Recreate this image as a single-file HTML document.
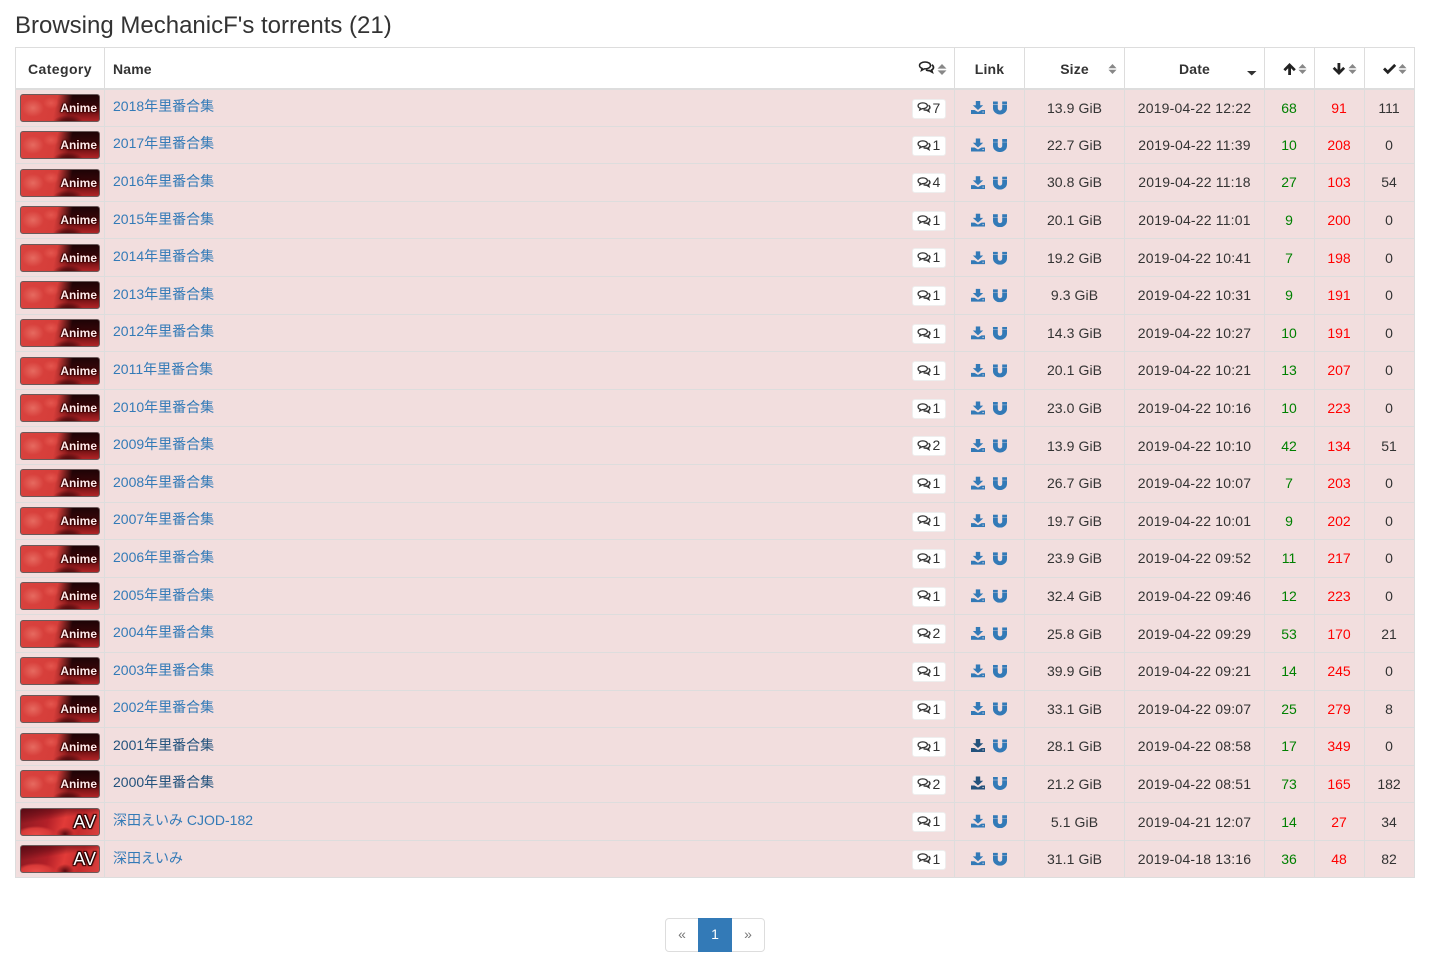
<!DOCTYPE html>
<html lang="en"><head><meta charset="utf-8"><title>Browsing MechanicF's torrents</title>
<style>
html,body{margin:0;padding:0;background:#fff}
body{width:1429px;height:970px;position:relative;overflow:hidden;font:14px/20px "Liberation Sans","Noto Sans CJK SC",sans-serif;color:#333}
h3{position:absolute;left:15px;top:13px;margin:0;font-size:24px;line-height:26px;font-weight:500}
table{position:absolute;left:15px;top:47px;width:1399px;border-collapse:collapse;table-layout:fixed}
th,td{border:1px solid #ddd;padding:0;text-align:center;position:relative;box-sizing:border-box}
th{height:41px;padding-top:2px;border-bottom:2px solid #ddd;font-weight:700;color:#333;letter-spacing:.15px}
th.n,td.n{text-align:left;padding-left:8px}
tr.r{height:37.6px}
td{background:#f2dede;vertical-align:middle}
td.n{padding-bottom:3px}
td.d{letter-spacing:.18px}
td.z{letter-spacing:.08px}
td.e{padding-right:1px}
a{color:#337ab7;text-decoration:none}
a.v{color:#23527c}
td.s{color:green;padding-right:1px}td.l{color:red;padding-right:1px}
.b{position:absolute;left:4px;top:4.5px;width:80px;height:28px;box-sizing:border-box;border:1px solid #6a5a5a;border-radius:3px;overflow:hidden;background:radial-gradient(ellipse 15px 7px at 47px 27px,#4a0a0c 0,rgba(74,10,12,.7) 50%,transparent 100%),radial-gradient(ellipse 11px 9px at 12px 13px,#e66a60 0,transparent 100%),radial-gradient(ellipse 8px 6px at 30px 8px,#e4564e 0,transparent 100%),linear-gradient(103deg,#d9423e 0,#d63e3a 44%,rgba(205,55,50,0) 62%),linear-gradient(180deg,#1e0306 0,#350608 40%,#7e1517 72%,#b02426 100%)}
.b i{position:absolute;right:2px;top:6px;font:700 12px/14px "Liberation Sans",sans-serif;color:#ffe9e9;text-shadow:0 0 2px #300,0 0 1px #300,1px 0 1px #300,-1px 0 1px #300}
.a{background:radial-gradient(ellipse 20px 8px at 15px 25px,#e94a46 0,#d83a38 70%,transparent 100%),linear-gradient(172deg,rgba(70,6,16,.75) 0,rgba(90,10,20,.5) 22%,transparent 40%),radial-gradient(ellipse 9px 7px at 44px 25px,#5a0a10 0,transparent 100%),linear-gradient(105deg,#8c1a22 0,#b32028 35%,#e23b38 55%,#c62b2c 75%,#d9403e 100%)}
.a i{top:3px;right:3px;font:400 18px/20px "Liberation Sans",sans-serif;color:#fff;text-shadow:0 0 2px #200,1px 1px 1px #200,-1px -1px 1px #200,1px -1px 1px #200,-1px 1px 1px #200}
.c{position:absolute;left:807px;top:9px;width:34px;height:20px;box-sizing:border-box;background:#fff;border:1px solid #eee;border-radius:3px;font-size:14px;line-height:16px;text-align:left;padding-left:19.500px;color:#333}
svg{position:absolute;overflow:visible}
.p{position:absolute;left:665px;top:918px;width:100px;height:34px;box-sizing:border-box;border:1px solid #ddd;border-radius:4px;font-size:14px;line-height:32px;text-align:center;color:#777}
.p span{position:absolute;top:-1px;height:34px}
.p .on{left:32px;width:34px;background:#337ab7;color:#fff}
</style></head>
<body>
<svg width="0" height="0" style="position:absolute"><defs>
<symbol id="cm" viewBox="0 0 16 13"><g fill="none" stroke="currentColor" stroke-width="1.5"><path d="M6.5 1C3.4 1 1 2.500 1 4.400c0 1.400 1 2.400 2.600 3L3 9.400l2.700-1.500h1c3 0 5.300-1.500 5.300-3.500S9.600 1 6.500 1z"/><path d="M13.300 3.800c1 .6 1.700 1.500 1.700 2.600 0 1.100-.7 2-1.900 2.600l.7 2.200-2.800-1.600c-1.300.1-2.500-.1-3.500-.6" stroke-width="1.700"/></g></symbol>
<symbol id="dl" viewBox="0 0 14 13"><path fill="currentColor" d="M4.800 0h4.400v4.200h3L7 9 1.800 4.200h3zM0 9h3.500L7 11l3.500-2H14v4H0zM11.500 10.500v1h1.200v-1z"/></symbol>
<symbol id="mg" viewBox="0 0 14 13"><path fill="currentColor" d="M0 0h4.800v2.800H0zM9.200 0H14v2.800H9.200zM0 3.200h4.800v3.600a2.200 2.200 0 0 0 4.400 0V3.200H14v3.600a7 6.200 0 0 1-14 0z"/></symbol>
<symbol id="so" viewBox="0 0 10 11"><path fill="#888" d="M5 0l4.500 4.600H.5zM.5 6.400h9L5 11z"/></symbol>
</defs></svg>
<h3>Browsing MechanicF's torrents (21)</h3>
<table>
<colgroup><col style="width:89px"><col style="width:850px"><col style="width:70px"><col style="width:100px"><col style="width:140px"><col style="width:50px"><col style="width:50px"><col style="width:50px"></colgroup>
<thead><tr><th style="letter-spacing:.4px">Category</th><th class="n">Name</th><th>Link</th><th>Size</th><th>Date</th><th></th><th></th><th></th></tr></thead>
<tbody>
<tr class="r"><td><span class="b"><i>Anime</i></span></td><td class="n"><a>2018年里番合集</a><span class="c">7</span></td><td></td><td class="z">13.9 GiB</td><td class="d">2019-04-22 12:22</td><td class="s">68</td><td class="l">91</td><td class="e">111</td></tr>
<tr class="r"><td><span class="b"><i>Anime</i></span></td><td class="n"><a>2017年里番合集</a><span class="c">1</span></td><td></td><td class="z">22.7 GiB</td><td class="d">2019-04-22 11:39</td><td class="s">10</td><td class="l">208</td><td class="e">0</td></tr>
<tr class="r"><td><span class="b"><i>Anime</i></span></td><td class="n"><a>2016年里番合集</a><span class="c">4</span></td><td></td><td class="z">30.8 GiB</td><td class="d">2019-04-22 11:18</td><td class="s">27</td><td class="l">103</td><td class="e">54</td></tr>
<tr class="r"><td><span class="b"><i>Anime</i></span></td><td class="n"><a>2015年里番合集</a><span class="c">1</span></td><td></td><td class="z">20.1 GiB</td><td class="d">2019-04-22 11:01</td><td class="s">9</td><td class="l">200</td><td class="e">0</td></tr>
<tr class="r"><td><span class="b"><i>Anime</i></span></td><td class="n"><a>2014年里番合集</a><span class="c">1</span></td><td></td><td class="z">19.2 GiB</td><td class="d">2019-04-22 10:41</td><td class="s">7</td><td class="l">198</td><td class="e">0</td></tr>
<tr class="r"><td><span class="b"><i>Anime</i></span></td><td class="n"><a>2013年里番合集</a><span class="c">1</span></td><td></td><td class="z">9.3 GiB</td><td class="d">2019-04-22 10:31</td><td class="s">9</td><td class="l">191</td><td class="e">0</td></tr>
<tr class="r"><td><span class="b"><i>Anime</i></span></td><td class="n"><a>2012年里番合集</a><span class="c">1</span></td><td></td><td class="z">14.3 GiB</td><td class="d">2019-04-22 10:27</td><td class="s">10</td><td class="l">191</td><td class="e">0</td></tr>
<tr class="r"><td><span class="b"><i>Anime</i></span></td><td class="n"><a>2011年里番合集</a><span class="c">1</span></td><td></td><td class="z">20.1 GiB</td><td class="d">2019-04-22 10:21</td><td class="s">13</td><td class="l">207</td><td class="e">0</td></tr>
<tr class="r"><td><span class="b"><i>Anime</i></span></td><td class="n"><a>2010年里番合集</a><span class="c">1</span></td><td></td><td class="z">23.0 GiB</td><td class="d">2019-04-22 10:16</td><td class="s">10</td><td class="l">223</td><td class="e">0</td></tr>
<tr class="r"><td><span class="b"><i>Anime</i></span></td><td class="n"><a>2009年里番合集</a><span class="c">2</span></td><td></td><td class="z">13.9 GiB</td><td class="d">2019-04-22 10:10</td><td class="s">42</td><td class="l">134</td><td class="e">51</td></tr>
<tr class="r"><td><span class="b"><i>Anime</i></span></td><td class="n"><a>2008年里番合集</a><span class="c">1</span></td><td></td><td class="z">26.7 GiB</td><td class="d">2019-04-22 10:07</td><td class="s">7</td><td class="l">203</td><td class="e">0</td></tr>
<tr class="r"><td><span class="b"><i>Anime</i></span></td><td class="n"><a>2007年里番合集</a><span class="c">1</span></td><td></td><td class="z">19.7 GiB</td><td class="d">2019-04-22 10:01</td><td class="s">9</td><td class="l">202</td><td class="e">0</td></tr>
<tr class="r"><td><span class="b"><i>Anime</i></span></td><td class="n"><a>2006年里番合集</a><span class="c">1</span></td><td></td><td class="z">23.9 GiB</td><td class="d">2019-04-22 09:52</td><td class="s">11</td><td class="l">217</td><td class="e">0</td></tr>
<tr class="r"><td><span class="b"><i>Anime</i></span></td><td class="n"><a>2005年里番合集</a><span class="c">1</span></td><td></td><td class="z">32.4 GiB</td><td class="d">2019-04-22 09:46</td><td class="s">12</td><td class="l">223</td><td class="e">0</td></tr>
<tr class="r"><td><span class="b"><i>Anime</i></span></td><td class="n"><a>2004年里番合集</a><span class="c">2</span></td><td></td><td class="z">25.8 GiB</td><td class="d">2019-04-22 09:29</td><td class="s">53</td><td class="l">170</td><td class="e">21</td></tr>
<tr class="r"><td><span class="b"><i>Anime</i></span></td><td class="n"><a>2003年里番合集</a><span class="c">1</span></td><td></td><td class="z">39.9 GiB</td><td class="d">2019-04-22 09:21</td><td class="s">14</td><td class="l">245</td><td class="e">0</td></tr>
<tr class="r"><td><span class="b"><i>Anime</i></span></td><td class="n"><a>2002年里番合集</a><span class="c">1</span></td><td></td><td class="z">33.1 GiB</td><td class="d">2019-04-22 09:07</td><td class="s">25</td><td class="l">279</td><td class="e">8</td></tr>
<tr class="r"><td><span class="b"><i>Anime</i></span></td><td class="n"><a class="v">2001年里番合集</a><span class="c">1</span></td><td></td><td class="z">28.1 GiB</td><td class="d">2019-04-22 08:58</td><td class="s">17</td><td class="l">349</td><td class="e">0</td></tr>
<tr class="r"><td><span class="b"><i>Anime</i></span></td><td class="n"><a class="v">2000年里番合集</a><span class="c">2</span></td><td></td><td class="z">21.2 GiB</td><td class="d">2019-04-22 08:51</td><td class="s">73</td><td class="l">165</td><td class="e">182</td></tr>
<tr class="r"><td><span class="b a"><i>AV</i></span></td><td class="n"><a>深田えいみ CJOD-182</a><span class="c">1</span></td><td></td><td class="z">5.1 GiB</td><td class="d">2019-04-21 12:07</td><td class="s">14</td><td class="l">27</td><td class="e">34</td></tr>
<tr class="r"><td><span class="b a"><i>AV</i></span></td><td class="n"><a>深田えいみ</a><span class="c">1</span></td><td></td><td class="z">31.1 GiB</td><td class="d">2019-04-18 13:16</td><td class="s">36</td><td class="l">48</td><td class="e">82</td></tr>
</tbody></table>

<svg style="left:0;top:0" width="1429" height="970" viewBox="0 0 1429 970">
<!-- header icons -->
<use href="#cm" x="918" y="61" width="17" height="13" color="#222"/>
<use href="#so" x="937" y="64" width="10" height="11"/>
<use href="#so" x="1108" y="64" width="9" height="10"/>
<path d="M1247 71h9.500l-4.750 4.500z" fill="#333"/>
<path d="M1289.500 63l6.300 6.200-1.900 1.900-2.900-2.800V75h-2.800v-6.700l-2.900 2.800-1.900-1.900z" fill="#222"/>
<use href="#so" x="1298" y="64" width="9" height="10"/>
<path d="M1339 75l-6.300-6.200 1.900-1.900 2.900 2.800V63h2.800v6.700l2.900-2.800 1.900 1.900z" fill="#222"/>
<use href="#so" x="1348" y="64" width="9" height="10"/>
<path d="M1383 69.500l2-2 2.800 2.800 6.400-6.400 2 2-8.400 8.400z" fill="#222"/>
<use href="#so" x="1398" y="64" width="9" height="10"/>
<!-- row icons -->
<g color="#337ab7">
<g id="row"><use href="#dl" x="971" y="101" width="14" height="13"/><use href="#mg" x="993" y="101.500" width="14" height="13"/></g>
<use href="#row" y="37.560"/><use href="#row" y="75.120"/><use href="#row" y="112.680"/><use href="#row" y="150.240"/><use href="#row" y="187.800"/><use href="#row" y="225.360"/><use href="#row" y="262.920"/><use href="#row" y="300.480"/><use href="#row" y="338.040"/><use href="#row" y="375.600"/><use href="#row" y="413.160"/><use href="#row" y="450.720"/><use href="#row" y="488.280"/><use href="#row" y="525.840"/><use href="#row" y="563.400"/><use href="#row" y="600.960"/>
<use href="#mg" x="993" y="739.500" width="14" height="13"/><use href="#dl" x="971" y="739" width="14" height="13" color="#23527c"/>
<use href="#mg" x="993" y="777" width="14" height="13"/><use href="#dl" x="971" y="776.500" width="14" height="13" color="#23527c"/>
<use href="#row" y="713.640"/><use href="#row" y="751.200"/>
</g>
<g color="#333" id="cms">
<use href="#cm" x="917" y="102" width="14" height="11"/><use href="#cm" x="917" y="140" width="14" height="11"/><use href="#cm" x="917" y="177" width="14" height="11"/><use href="#cm" x="917" y="215" width="14" height="11"/><use href="#cm" x="917" y="252" width="14" height="11"/><use href="#cm" x="917" y="290" width="14" height="11"/><use href="#cm" x="917" y="328" width="14" height="11"/><use href="#cm" x="917" y="365" width="14" height="11"/><use href="#cm" x="917" y="403" width="14" height="11"/><use href="#cm" x="917" y="440" width="14" height="11"/><use href="#cm" x="917" y="478" width="14" height="11"/><use href="#cm" x="917" y="515" width="14" height="11"/><use href="#cm" x="917" y="553" width="14" height="11"/><use href="#cm" x="917" y="590" width="14" height="11"/><use href="#cm" x="917" y="628" width="14" height="11"/><use href="#cm" x="917" y="666" width="14" height="11"/><use href="#cm" x="917" y="703" width="14" height="11"/><use href="#cm" x="917" y="741" width="14" height="11"/><use href="#cm" x="917" y="778" width="14" height="11"/><use href="#cm" x="917" y="816" width="14" height="11"/><use href="#cm" x="917" y="853" width="14" height="11"/>
</g>
</svg>

<div class="p"><span style="left:0;width:32px">«</span><span class="on">1</span><span style="left:66px;width:32px">»</span></div>
</body></html>
